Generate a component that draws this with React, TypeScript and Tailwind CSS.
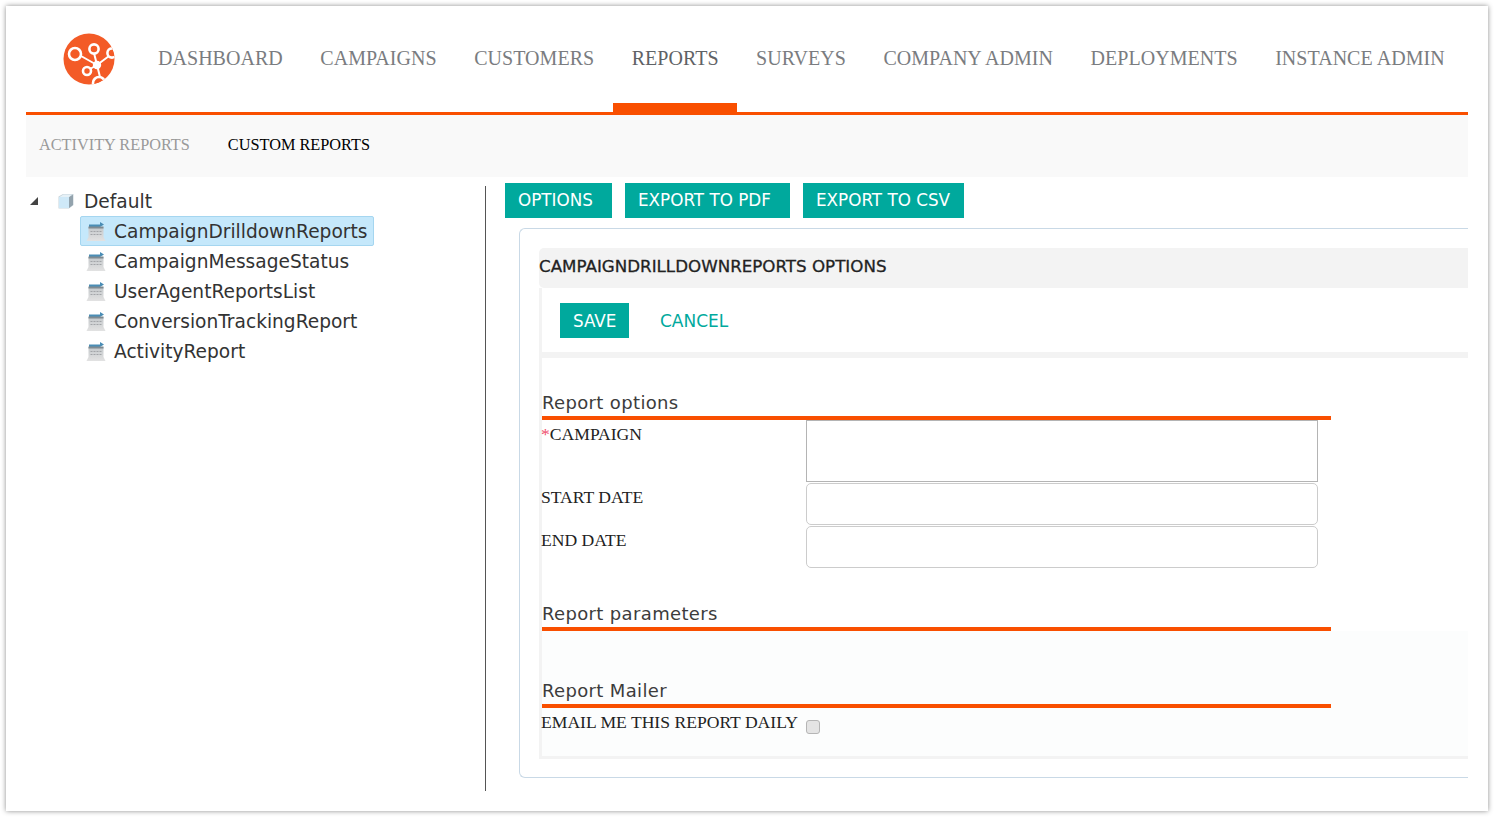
import React from "react";

const navItems = ["DASHBOARD", "CAMPAIGNS", "CUSTOMERS", "REPORTS", "SURVEYS", "COMPANY ADMIN", "DEPLOYMENTS", "INSTANCE ADMIN"];
const reports = ["CampaignDrilldownReports", "CampaignMessageStatus", "UserAgentReportsList", "ConversionTrackingReport", "ActivityReport"];
const uiFont = "font-['DejaVu_Sans',sans-serif]";

const Logo = () => (
  <svg width="52" height="52" viewBox="0 0 52 52" className="shrink-0">
    <defs>
      <clipPath id="logoClip">
        <circle cx="26" cy="26" r="25.5" />
      </clipPath>
    </defs>
    <circle cx="26" cy="26" r="25.5" fill="#f35b27" />
    <g clipPath="url(#logoClip)" fill="none" stroke="#fff" strokeWidth="2.6">
      <path d="M18 23L34 32M31 20L34 32M27 36L34 32M46 23L34 32M34 32L37 44" strokeWidth="2" />
      <circle cx="12" cy="21" r="6" fill="#f35b27" />
      <circle cx="31" cy="16" r="4.6" fill="#f35b27" />
      <circle cx="24" cy="38" r="4" fill="#f35b27" />
      <circle cx="49" cy="20" r="4.6" fill="#f35b27" />
      <circle cx="36" cy="50" r="6" fill="#f35b27" />
    </g>
    <circle cx="34" cy="32" r="4.2" fill="#fff" />
  </svg>
);

const CubeIcon = () => (
  <svg width="16" height="16" viewBox="0 0 16 16" className="shrink-0">
    <path d="M0.5 3.5L5 1H15.5V12L11 15.5H0.5Z" fill="#c9d5dc" />
    <path d="M1 4H11V15H1Z" fill="#cfe9f8" />
    <path d="M11 4L15 1.8V12L11 15Z" fill="#93a3ad" />
    <path d="M1.5 4L5.5 1.5H14L11 4Z" fill="#e6f1f7" />
  </svg>
);

const ReportIcon = () => (
  <svg width="20" height="20" viewBox="0 0 20 20" className="shrink-0">
    <defs>
      <linearGradient id="reportBody" x1="0" y1="0" x2="0" y2="1">
        <stop offset="0" stopColor="#c4c8cb" />
        <stop offset="1" stopColor="#e2e2e2" />
      </linearGradient>
    </defs>
    <path d="M2.5 6H17.5V16L19.5 20H0.5L2.5 16Z" fill="url(#reportBody)" />
    <path d="M3 3.5H14V1L18 3.5L14 6H3Z" fill="#4a8db5" />
    <path d="M2.5 5.5H17.5V7.5H2.5Z" fill="#7f8a91" />
    <path d="M4.5 10.5H15.5M4.5 13.5H15.5" stroke="#a2a5a8" strokeWidth="1.2" strokeDasharray="2 1" />
  </svg>
);

const TealButton = ({ label, width, className = "" }: { label: string; width: string; className?: string }) => (
  <button className={`h-[35px] ${width} bg-[#00a99d] pl-[13px] text-left text-[16.8px] text-white ${uiFont} ${className}`}>{label}</button>
);

const SectionTitle = ({ title, height }: { title: string; height: string }) => (
  <div className={`${height} flex flex-col justify-end`}>
    <div className={`pb-[1px] text-[18px] leading-[24px] text-[#3c3c3c] tracking-[0.35px] ${uiFont}`}>{title}</div>
    <div className="h-[4px] w-[789px] bg-[#f94f00]" />
  </div>
);

const FieldRow = ({ label, required, height, children }: { label: string; required?: boolean; height: string; children: React.ReactNode }) => (
  <div className={`flex ${height}`}>
    <div className="w-[265px] -ml-px pt-[3px] text-[17.6px] leading-[22px] text-[#222] font-['Liberation_Serif',serif]">
      {required && <span className="text-[#f0506e]">*</span>}
      {label}
    </div>
    {children}
  </div>
);

export default function App() {
  return (
    <div className="w-[1494px] h-[817px] bg-white p-[6px] overflow-hidden">
      <div className="h-[805px] bg-white px-[20px] shadow-[0_0_5px_rgba(0,0,0,0.45)]">
        <header className="flex h-[106px] items-start">
          <div className="ml-[37px] mt-[27px] w-[76.25px]">
            <Logo />
          </div>
          <nav className="flex h-[106px] tracking-[0.04px] font-['Liberation_Serif',serif]">
            {navItems.map((item) => (
              <div key={item} className="relative flex h-full items-start px-[18.75px] pt-[39px]">
                <span className={`text-[20px] leading-[27px] whitespace-nowrap ${item === "REPORTS" ? "text-[#5f6265]" : "text-[#7a7c80]"}`}>{item}</span>
                {item === "REPORTS" && <div className="absolute bottom-0 left-0 right-0 h-[9px] bg-[#f94f00]" />}
              </div>
            ))}
          </nav>
        </header>
        <div className="h-[3px] bg-[#f94f00]" />

        <div className="flex h-[62px] items-center bg-[#f9f9f9] pb-[2px] pl-[13px] text-[16.3px] font-['Liberation_Serif',serif]">
          <span className="text-[#9a9a9a]">ACTIVITY REPORTS</span>
          <span className="ml-[38px] text-black">CUSTOM REPORTS</span>
        </div>

        <div className="flex">
          <aside className="mt-[9px] h-[605px] w-[460px] border-r border-[#555] pl-[3px]">
            <div className={`text-[18.6px] text-[#333] ${uiFont}`}>
              <div className="flex h-[30px] items-center">
                <div className="ml-[1px] mt-[-1px] h-0 w-0 border-b-[8px] border-l-[8px] border-b-[#444] border-l-transparent" />
                <div className="ml-[20px]">
                  <CubeIcon />
                </div>
                <span className="ml-[10px] pt-[1px]">Default</span>
              </div>
              {reports.map((report, i) => (
                <div key={report} className="flex h-[30px] items-center pl-[51px]">
                  <div className={`flex h-[30px] w-[294px] items-center gap-[8px] rounded-[2px] border pl-[5px] ${i === 0 ? "border-[#a5d6f0] bg-[#c5e8fb]" : "border-transparent"}`}>
                    <ReportIcon />
                    <span className="whitespace-nowrap pt-[1px]">{report}</span>
                  </div>
                </div>
              ))}
            </div>
          </aside>

          <main className="w-[982px] pl-[19px] pt-[6px]">
            <div className="flex gap-[13px]">
              <TealButton label="OPTIONS" width="w-[107px]" />
              <TealButton label="EXPORT TO PDF" width="w-[165px]" />
              <TealButton label="EXPORT TO CSV" width="w-[161px]" />
            </div>

            <section className="ml-[14px] mt-[10px] h-[550px] rounded-l-[6px] border-y border-l border-[#c9d9e6] pl-[19px] pt-[19px]">
              <div className={`flex h-[40px] items-center rounded-l-[5px] bg-[#f3f3f3] pb-[2px] text-[16.7px] text-[#222] [-webkit-text-stroke:0.3px_#222] ${uiFont}`}>
                CAMPAIGNDRILLDOWNREPORTS OPTIONS
              </div>
              <div className="h-[471px] border-l-[3px] border-[#f3f3f3] bg-white">
                <div className="flex h-[64px] items-center pl-[18px]">
                  <TealButton label="SAVE" width="w-[69px]" className="pt-[3px]" />
                  <span className={`ml-[31px] mt-[3px] text-[17px] text-[#00a99d] ${uiFont}`}>CANCEL</span>
                </div>
                <div className="h-[6px] bg-[#f3f3f3]" />
                <SectionTitle title="Report options" height="h-[62px]" />
                <FieldRow label="CAMPAIGN" required height="h-[63px]">
                  <div className="h-[62px] w-[512px] border border-[#b4b4b4]" />
                </FieldRow>
                <FieldRow label="START DATE" height="h-[43px]">
                  <div className="h-[42px] w-[512px] rounded-[5px] border border-[#cccccc]" />
                </FieldRow>
                <FieldRow label="END DATE" height="h-[42px]">
                  <div className="h-[42px] w-[512px] rounded-[5px] border border-[#cccccc]" />
                </FieldRow>
                <SectionTitle title="Report parameters" height="h-[63px]" />
                <div className="bg-[#fcfdfd]">
                  <SectionTitle title="Report Mailer" height="h-[77px]" />
                  <div className="flex h-[48px] text-[17.6px] font-['Liberation_Serif',serif] text-[#222]">
                    <span className="-ml-px mt-[3px] w-[265px] whitespace-nowrap leading-[22px]">EMAIL ME THIS REPORT DAILY</span>
                    <input type="checkbox" className="mt-[12px] h-[14px] w-[14px] appearance-none rounded-[3px] border border-[#b5b5b5] bg-[#e4e4e4]" />
                  </div>
                </div>
                <div className="h-[3px] bg-[#f3f3f3]" />
              </div>
            </section>
          </main>
        </div>
      </div>
    </div>
  );
}
